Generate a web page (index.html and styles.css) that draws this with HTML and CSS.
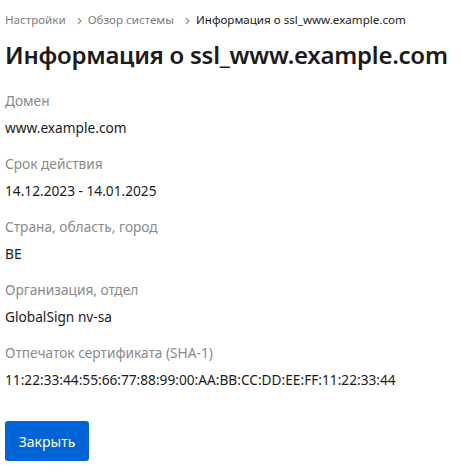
FILE: index.html
```html
<!DOCTYPE html>
<html lang="ru">
<head>
<meta charset="utf-8">
<link rel="stylesheet" href="styles.css">
</head>
<body>
<div class="page">
  <nav class="crumbs">
    <span class="crumb">Настройки</span>
    <svg class="sep" width="5" height="8" viewBox="0 0 5 8"><path d="M1 1l3 3-3 3" fill="none" stroke="#8a8a8a" stroke-width="1.1"/></svg>
    <span class="crumb">Обзор системы</span>
    <svg class="sep" width="5" height="8" viewBox="0 0 5 8"><path d="M1 1l3 3-3 3" fill="none" stroke="#8a8a8a" stroke-width="1.1"/></svg>
    <span class="crumb current">Информация о ssl_www.example.com</span>
  </nav>
  <h1 class="title">Информация о ssl_www.example.com</h1>
  <dl class="fields">
    <div class="field"><dt class="label">Домен</dt><dd class="value">www.example.com</dd></div>
    <div class="field"><dt class="label">Срок действия</dt><dd class="value">14.12.2023 - 14.01.2025</dd></div>
    <div class="field"><dt class="label">Страна, область, город</dt><dd class="value">BE</dd></div>
    <div class="field"><dt class="label">Организация, отдел</dt><dd class="value">GlobalSign nv-sa</dd></div>
    <div class="field"><dt class="label">Отпечаток сертификата (SHA-1)</dt><dd class="value">11:22:33:44:55:66:77:88:99:00:AA:BB:CC:DD:EE:FF:11:22:33:44</dd></div>
  </dl>
  <button class="btn">Закрыть</button>
</div>
</body>
</html>
```
FILE: styles.css
```css
* { box-sizing: border-box; }
html, body { margin: 0; padding: 0; background: #fff; }
body { font-family: "Noto Sans", "DejaVu Sans", sans-serif; color: #1b1b1b; }
.page { padding: 11px 5px 0 5px; display: flex; flex-direction: column; align-items: flex-start; }
.crumbs { display: flex; align-items: center; font-size: 11.6px; line-height: 18px; height: 18px; white-space: nowrap; }
.crumb { color: #7d7d7d; }
.crumb.current { color: #1b1b1b; }
.sep { display: block; margin: 1px 6px 0 11px; flex: none; }
.title { margin: 10px 0 0 0; font-size: 24px; font-weight: 600; line-height: 32px; color: #1b1b1b; white-space: nowrap; letter-spacing: -0.25px; }
.fields { margin: 20px 0 0 0; display: flex; flex-direction: column; gap: 16px; }
.field { display: flex; flex-direction: column; gap: 7px; }
.label { margin: 0; font-size: 13.7px; line-height: 20px; color: #8a8a8a; }
.value { margin: 0; font-size: 13.7px; line-height: 20px; color: #1b1b1b; white-space: nowrap; }
.btn { margin-top: 31px; width: 84px; height: 40px; border: none; border-radius: 3px; background: #0063d6; color: #fff; font-family: inherit; font-size: 14px; padding: 0; }
```
